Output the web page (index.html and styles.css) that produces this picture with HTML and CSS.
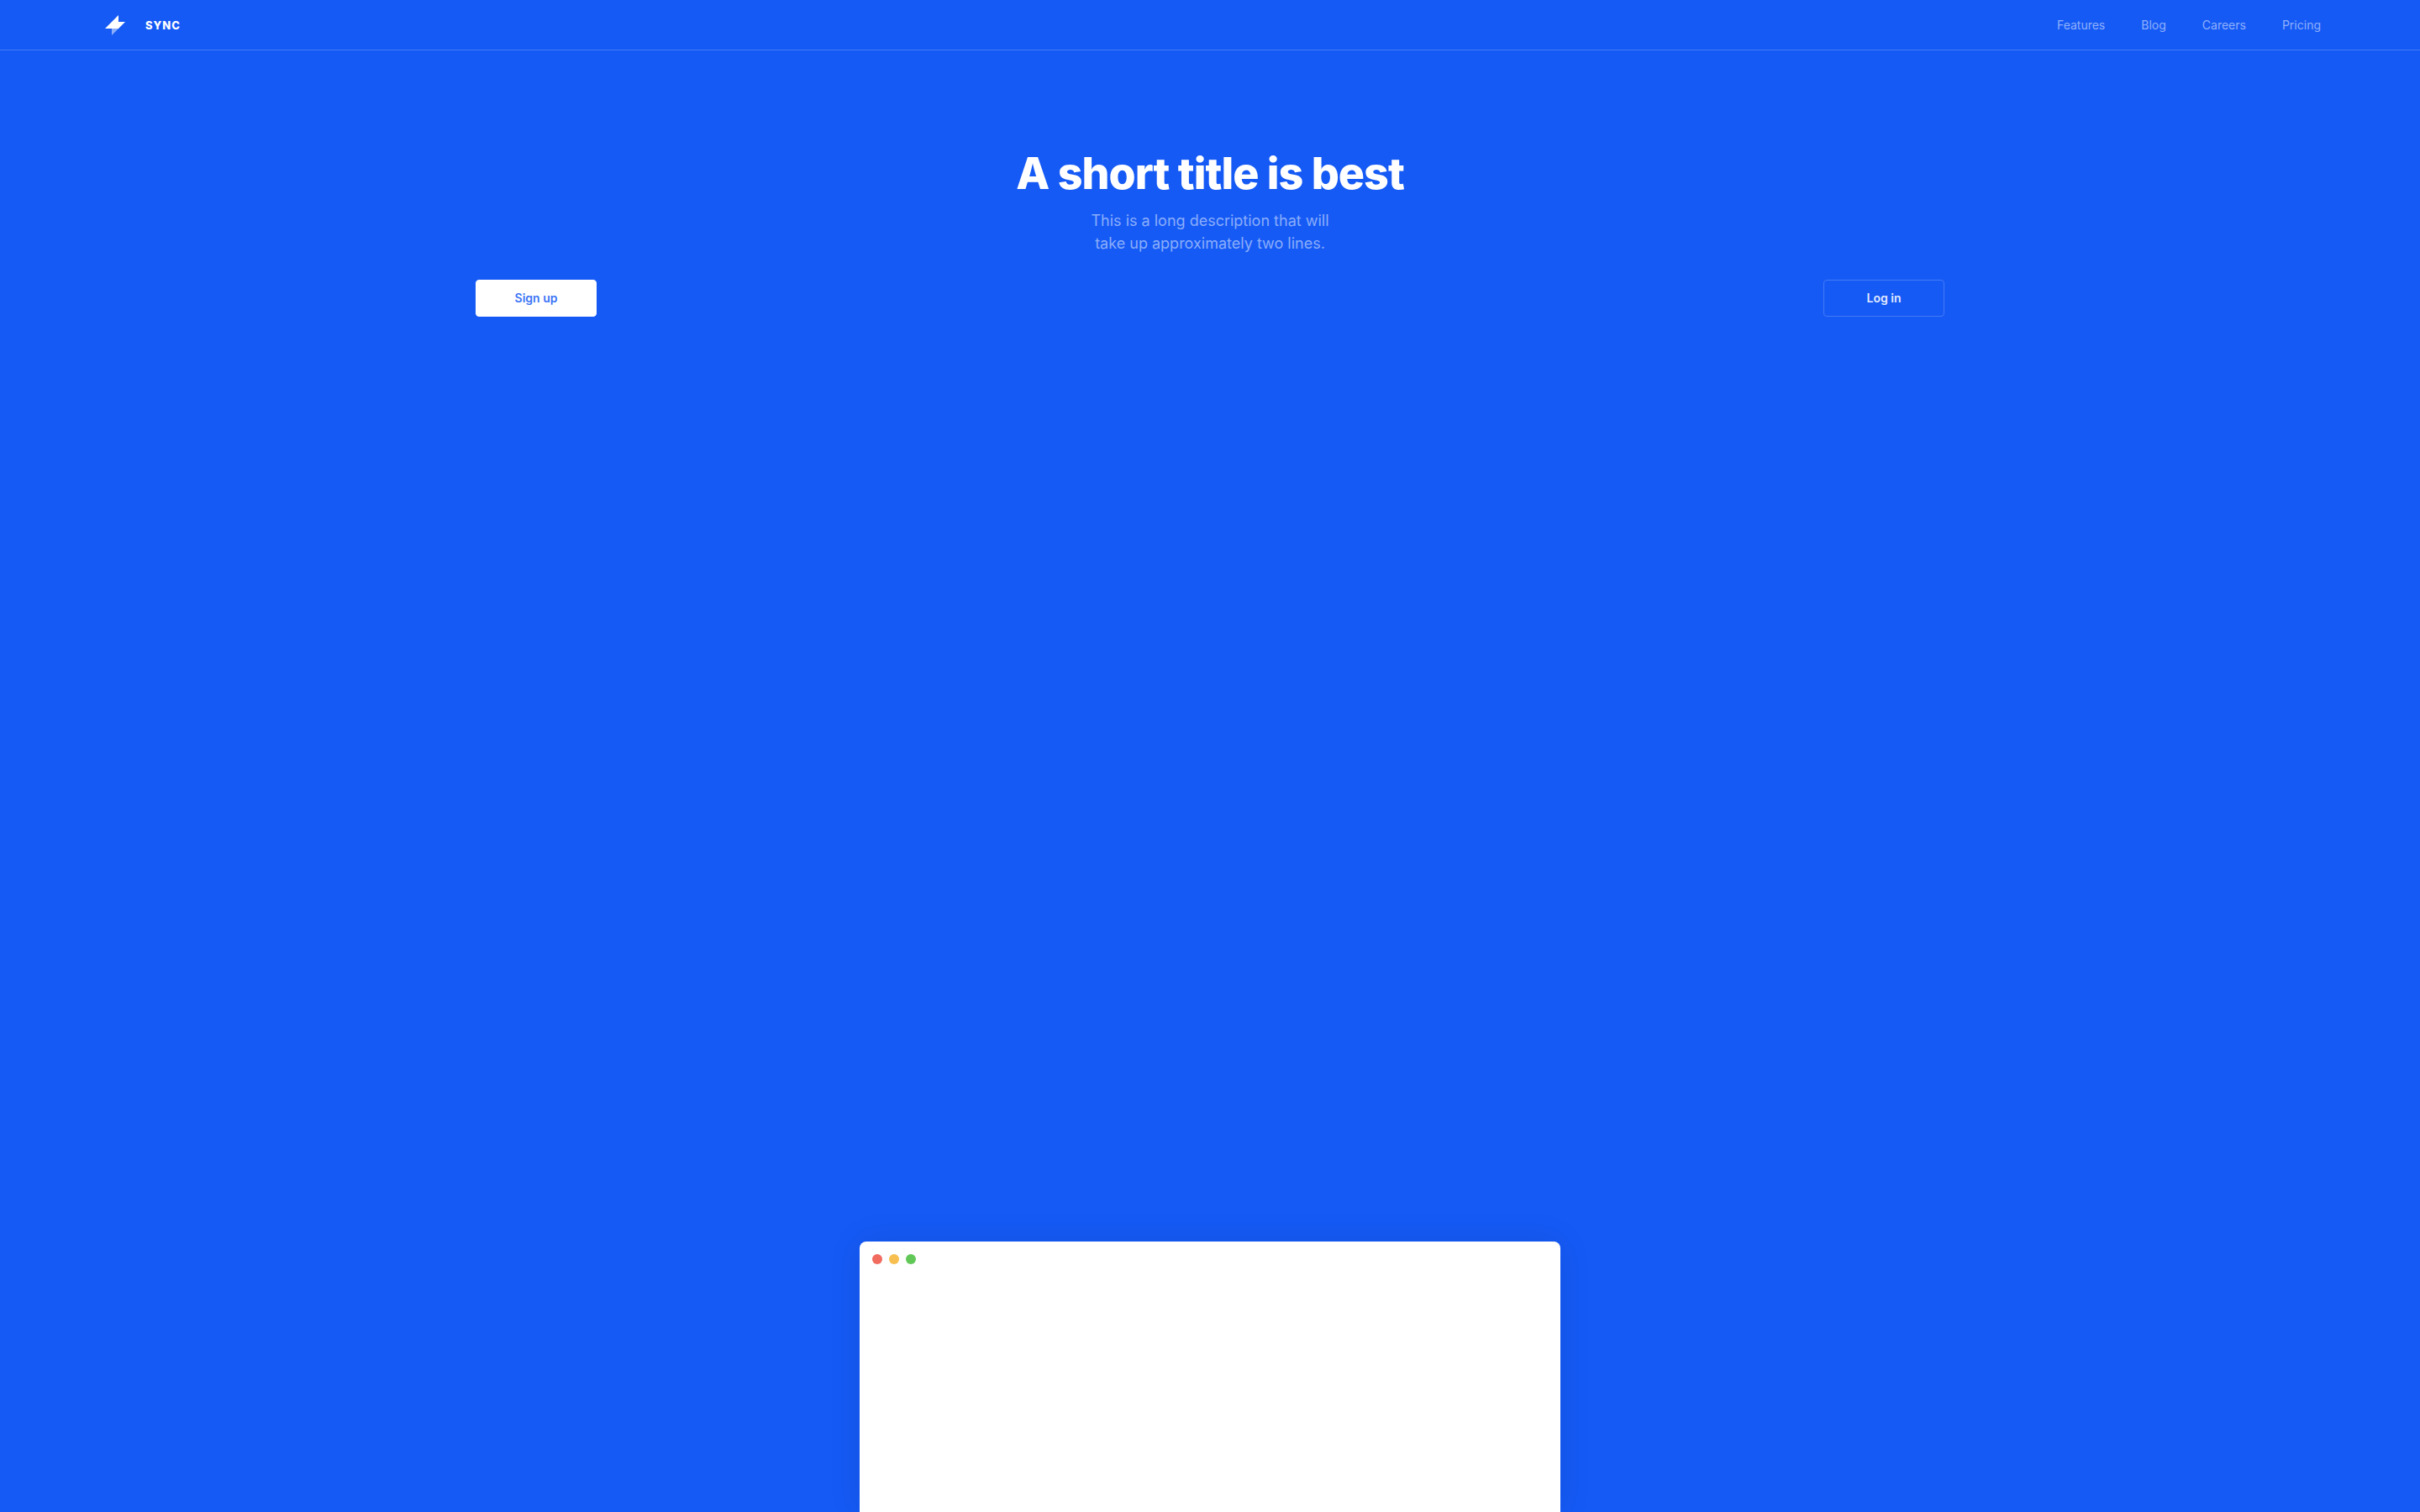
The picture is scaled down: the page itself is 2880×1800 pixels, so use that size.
FILE: index.html
```html
<!DOCTYPE html>
<html lang="en">
<head>
<meta charset="utf-8">
<title>Sync</title>
<link rel="stylesheet" href="styles.css">
</head>
<body>
<header class="nav">
  <a class="brand" href="#">
    <svg class="logo" viewBox="0 0 24 24" aria-hidden="true"><path d="M16 0v8h8l-8 8H0z" fill="#fff"/><path d="M8 16h8l-8 8z" fill="#fff" fill-opacity=".5"/></svg>
    <span class="brand-name">SYNC</span>
  </a>
  <nav class="links">
    <a href="#">Features</a>
    <a href="#">Blog</a>
    <a href="#">Careers</a>
    <a href="#">Pricing</a>
  </nav>
</header>
<main class="hero">
  <h1 class="title">A short title is best</h1>
  <p class="description">This is a long description that will<br>take up approximately two lines.</p>
  <div class="actions">
    <button class="button primary" type="button">Sign up</button>
    <button class="button outline" type="button">Log in</button>
  </div>
  <section class="window" aria-label="Preview">
    <span class="dot red"></span>
    <span class="dot yellow"></span>
    <span class="dot green"></span>
  </section>
</main>
</body>
</html>
```
FILE: styles.css
```css
* { box-sizing: border-box; }
html, body { height: 100%; }
body {
  display: flex;
  flex-direction: column;
  margin: 0;
  overflow: hidden;
  background: #155af5;
  color: #fff;
  font-family: Inter, sans-serif;
}
a { color: inherit; text-decoration: none; }
.nav {
  display: flex;
  align-items: center;
  justify-content: space-between;
  flex: none;
  height: 60px;
  padding: 0 118px 0 125px;
  border-bottom: 1px solid #447bf7;
}
.brand { display: flex; align-items: center; gap: 24px; }
.logo { width: 24px; height: 24px; }
.brand-name { font-size: 13px; font-weight: 800; letter-spacing: 1px; }
.links {
  display: flex;
  gap: 43px;
  color: #8fb0fb;
  font-size: 14px;
}
.hero {
  display: flex;
  flex: 1;
  flex-direction: column;
  align-items: center;
  padding-top: 116px;
}
.title { margin: 0; font-size: 52px; line-height: 62px; font-weight: 800; letter-spacing: -1px; }
.description {
  margin: 11px 0 30px;
  color: #8aadfa;
  font-size: 18px;
  line-height: 27px;
  text-align: center;
}
.actions { display: flex; justify-content: space-between; width: 100%; padding: 0 566px; }
.button {
  width: 144px;
  height: 44px;
  padding: 0;
  border: 1px solid #fff;
  border-radius: 4px;
  font: 600 14px/20px Inter, sans-serif;
}
.primary { background: #fff; color: #3a74f6; }
.outline { background: transparent; border-color: #447bf7; color: #e3ebfe; }
.window {
  display: flex;
  gap: 8px;
  width: 834px;
  height: 322px;
  margin-top: auto;
  padding: 15px;
  border-radius: 8px 8px 0 0;
  background: #fff;
  box-shadow: 0 0 40px rgba(0, 0, 0, 0.09);
}
.dot { width: 12px; height: 12px; border-radius: 50%; }
.red { background: #f16b5f; }
.yellow { background: #f7bf4f; }
.green { background: #61c857; }
```
